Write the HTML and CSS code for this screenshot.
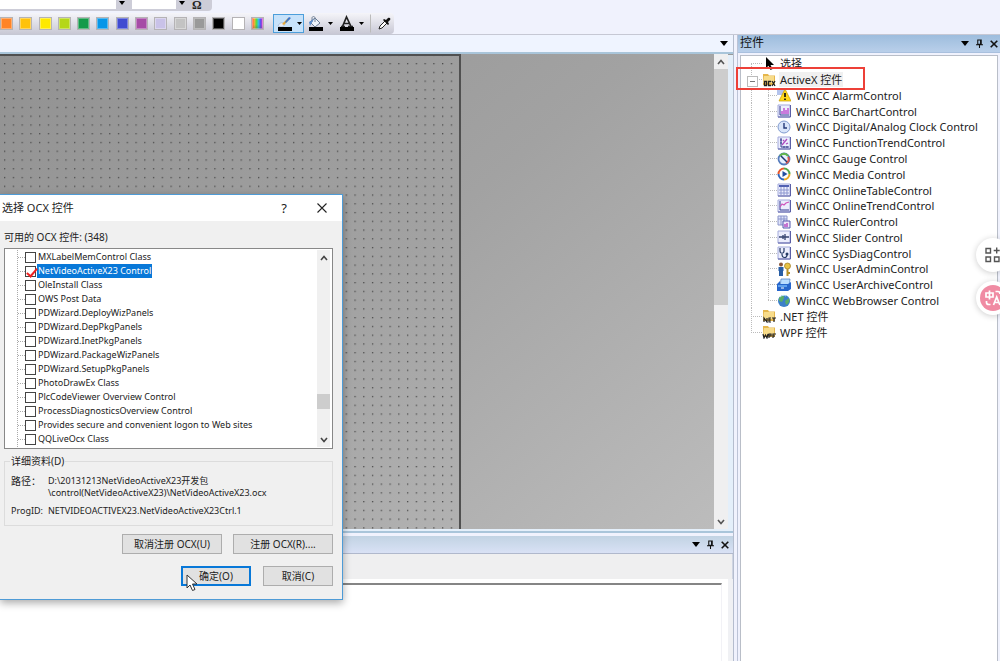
FILE: index.html
```html
<!DOCTYPE html>
<html lang="zh-CN">
<head>
<meta charset="utf-8">
<title>选择 OCX 控件</title>
<link rel="stylesheet" href="styles.css">
</head>
<body>
<svg class="defs" aria-hidden="true">
  <symbol id="down" viewBox="0 0 8 5"><path d="M0 0h8L4 5z"/></symbol>
  <symbol id="pin" viewBox="0 0 8 10"><path d="M2 1h4v5H2zM0 6.500h8M4 6.500V10M5.200 1v5" fill="none" stroke="currentColor" stroke-width="1.200"/></symbol>
  <symbol id="close" viewBox="0 0 8 8"><path d="M.7.7l6.600 6.600M7.300.7L.7 7.300" fill="none" stroke="currentColor" stroke-width="1.600"/></symbol>
  <symbol id="chev-up" viewBox="0 0 8 6"><path d="M1 5l3-3.500L7 5" fill="none" stroke="currentColor" stroke-width="1.600"/></symbol>
  <symbol id="chev-down" viewBox="0 0 8 6"><path d="M1 1l3 3.500L7 1" fill="none" stroke="currentColor" stroke-width="1.600"/></symbol>
  <symbol id="folder" viewBox="0 0 14 14"><path d="M1 1h5l1 1.500h6V12H1z" fill="#e5b64c"/><path d="M2 3h10v7H1z" fill="#f8dc8a"/></symbol>
  <symbol id="frame" viewBox="0 0 14 14"><path d="M1 1h12v12H1z" fill="#eceefd" stroke="#a3aadb"/><path d="M1 13h12.500V1" fill="none" stroke="#5a5fa6"/></symbol>
</svg>

<header class="toolbars">
  <div class="bar bar-font">
    <select class="combo combo-wide" aria-label="字体"><option></option></select>
    <svg class="combo-arrow" viewBox="0 0 11 9"><path d="M3 1h6L6 5z"/></svg>
    <select class="combo combo-narrow" aria-label="字号"><option></option></select>
    <svg class="combo-arrow" viewBox="0 0 11 9"><path d="M3 1h6L6 5z"/></svg>
    <button class="omega" aria-label="符号">Ω</button>
  </div>
  <div class="bar bar-color">
    <div class="swatches">
      <button class="swatch orange" aria-label="橙色"></button>
      <button class="swatch amber" aria-label="琥珀色"></button>
      <button class="swatch yellow" aria-label="黄色"></button>
      <button class="swatch lime" aria-label="黄绿色"></button>
      <button class="swatch green" aria-label="绿色"></button>
      <button class="swatch sky" aria-label="天蓝色"></button>
      <button class="swatch blue" aria-label="蓝色"></button>
      <button class="swatch purple" aria-label="紫色"></button>
      <button class="swatch lavender" aria-label="淡紫色"></button>
      <button class="swatch silver" aria-label="银色"></button>
      <button class="swatch gray" aria-label="灰色"></button>
      <button class="swatch black" aria-label="黑色"></button>
      <button class="swatch white" aria-label="白色"></button>
      <button class="swatch rainbow" aria-label="更多颜色"></button>
    </div>
    <button class="tool active" aria-label="线条颜色"><svg width="29" height="18" viewBox="0 0 29 18"><path d="M4 11c1-3 4-4 6-3s0 4-3 4z" fill="#e7edf8" stroke="#9badc8" stroke-width=".6"/><path d="M8 9l6-6 2 1-6 6z" fill="#e5a93a"/><path d="M11 7l4-5 2 1-5 5z" fill="#3c75cc"/><path d="M4 12h14v4H4z"/><path d="M23 7h5l-2.500 3z"/></svg></button>
    <button class="tool" aria-label="填充颜色"><svg width="29" height="18" viewBox="0 0 29 18"><path d="M5 7l5-4 5 5-5 4z" fill="#eef3fa" stroke="#667892"/><path d="M7 7V3c0-2 3-2 3 0v4" fill="none" stroke="#738399"/><path d="M4 7l5-3-4 7z" fill="#5c8dcc"/><path d="M4 12h14v4H4z"/><path d="M23 7h5l-2.500 3z"/></svg></button>
    <button class="tool" aria-label="字体颜色"><svg width="29" height="18" viewBox="0 0 29 18"><path d="M6.500 11.500L10.500 2l4.500 9.500M8 8.500h5M5 11.500h4M12 11.500h5" fill="none" stroke="#222" stroke-width="1.700"/><path d="M4 12h14v4H4z"/><path d="M23 7h5l-2.500 3z"/></svg></button>
    <button class="tool dropper" aria-label="吸管"><svg width="14" height="16" viewBox="0 0 14 16"><path d="M2 13l1-3 5-5 2 2-5 5z" fill="#fff" stroke="#222"/><path d="M6 4l1-1 2 1 2-2c2-1 3 1 2 2l-2 2 1 2-1 1z" fill="#111"/></svg></button>
  </div>
</header>

<main class="workspace">
  <section class="editor">
    <div class="doc-tabs"><button class="plain" aria-label="文档列表"><svg width="8" height="5"><use href="#down"/></svg></button></div>
    <div class="canvas-row">
      <div class="canvas">
        <div class="page">
          <svg width="100%" height="100%"><defs><pattern id="dots" x="4" y="7" width="8.760" height="8.760" patternUnits="userSpaceOnUse"><rect width="1.300" height="1.300" fill="#4c4c4c"/></pattern></defs><rect width="100%" height="100%" fill="url(#dots)"/></svg>
        </div>
      </div>
      <div class="vscroll">
        <button class="plain scroll-btn" aria-label="向上滚动"><svg width="8" height="6"><use href="#chev-up"/></svg></button>
        <div class="thumb"></div>
        <button class="plain scroll-btn" aria-label="向下滚动"><svg width="8" height="6"><use href="#chev-down"/></svg></button>
      </div>
    </div>
    <div class="output">
      <div class="pane-title">
        <span></span>
        <button class="plain" aria-label="菜单"><svg width="8" height="5"><use href="#down"/></svg></button>
        <button class="plain" aria-label="固定"><svg width="7" height="9"><use href="#pin"/></svg></button>
        <button class="plain" aria-label="关闭"><svg width="8" height="8"><use href="#close"/></svg></button>
      </div>
      <div class="output-tools"></div>
      <div class="output-body"><div class="output-sheet"></div></div>
    </div>
  </section>

  <aside class="controls">
    <div class="pane-title controls-title">
      <span>控件</span>
      <button class="plain" aria-label="菜单"><svg width="8" height="5"><use href="#down"/></svg></button>
      <button class="plain" aria-label="固定"><svg width="7" height="9"><use href="#pin"/></svg></button>
      <button class="plain" aria-label="关闭"><svg width="8" height="8"><use href="#close"/></svg></button>
    </div>
    <div class="tree-box">
      <ul class="tree">
        <li><i class="branch first"></i><svg class="ico" viewBox="0 0 14 14"><path d="M4 0v11l2.500-2.300L8.500 13l2-1-2-4h3.500z"/></svg><span>选择</span></li>
        <li><i class="branch open"></i><svg class="ico" viewBox="0 0 14 14"><use href="#folder"/><path d="M2.500 8.500v4h2v-4zM9 8.500H6.500v4H9M10 8l3 5M13 8l-3 5" fill="none" stroke="#222" stroke-width="1.300"/></svg><span class="current">ActiveX 控件</span></li>
        <li><i class="rail"></i><i class="branch sub"></i><svg class="ico" viewBox="0 0 14 14"><path d="M0 0h8v7H0z" fill="#b5c4ed"/><path d="M8 1l6 12H2z" fill="#ffd91a" stroke="#c69a00" stroke-width=".7"/><path d="M8 5v4M8 10.500V12" stroke="#111" stroke-width="1.700"/></svg><span>WinCC AlarmControl</span></li>
        <li><i class="rail"></i><i class="branch sub"></i><svg class="ico" viewBox="0 0 14 14"><use href="#frame"/><path d="M3 2v9h9" fill="none" stroke="#333a91"/><path d="M5 10V7M7 10V4M9 10V6M11 10V4" stroke="#be55d2" stroke-width="1.500"/></svg><span>WinCC BarChartControl</span></li>
        <li><i class="rail"></i><i class="branch sub"></i><svg class="ico" viewBox="0 0 14 14"><circle cx="7" cy="7" r="6" fill="#d9e5fa" stroke="#819bcf"/><path d="M7 3v5h3" fill="none" stroke="#243b79" stroke-width="1.400"/></svg><span>WinCC Digital/Analog Clock Control</span></li>
        <li><i class="rail"></i><i class="branch sub"></i><svg class="ico" viewBox="0 0 14 14"><use href="#frame"/><path d="M4 2v9h8M3 4h2M3 7h2M7 10v2M10 10v2" fill="none" stroke="#353d8d"/><path d="M5 9l5-6M6 4l1 1M9 8l2-1" stroke="#ae4ac0" stroke-width="1.300"/></svg><span>WinCC FunctionTrendControl</span></li>
        <li><i class="rail"></i><i class="branch sub"></i><svg class="ico" viewBox="0 0 14 14"><circle cx="7" cy="7" r="5.500" fill="#e8f1ff" stroke="#557bbc" stroke-width="1.800"/><path d="M3 4c2-3 6-3 8 0" fill="none" stroke="#64b94a" stroke-width="2"/><path d="M11 5c2 3 0 5-2 6" fill="none" stroke="#e0574b" stroke-width="2"/><path d="M4 4l6 6" stroke="#213975" stroke-width="1.500"/></svg><span>WinCC Gauge Control</span></li>
        <li><i class="rail"></i><i class="branch sub"></i><svg class="ico" viewBox="0 0 14 14"><circle cx="7" cy="7" r="5.500" fill="#fff"/><path d="M7 1.500A5.500 5.500 0 001.500 7" fill="none" stroke="#e85a2d" stroke-width="2"/><path d="M7 1.500A5.500 5.500 0 0112.500 7" fill="none" stroke="#55a74a" stroke-width="2"/><path d="M1.500 7A5.500 5.500 0 007 12.500" fill="none" stroke="#3267bd" stroke-width="2"/><path d="M12.500 7A5.500 5.500 0 017 12.500" fill="none" stroke="#eba927" stroke-width="2"/><path d="M5.500 4l5 3-5 3z" fill="#244f9f"/></svg><span>WinCC Media Control</span></li>
        <li><i class="rail"></i><i class="branch sub"></i><svg class="ico" viewBox="0 0 14 14"><use href="#frame"/><path d="M2 3h10" stroke="#5160b2" stroke-width="2"/><path d="M4 4v8M7 4v8M10 4v8M2 7h10M2 10h10" stroke="#8d97cf"/></svg><span>WinCC OnlineTableControl</span></li>
        <li><i class="rail"></i><i class="branch sub"></i><svg class="ico" viewBox="0 0 14 14"><use href="#frame"/><path d="M3 2v9h9" fill="none" stroke="#333a91"/><path d="M3 8l2-3 2 1 2-2 3-1" fill="none" stroke="#cf55bc" stroke-width="1.200"/></svg><span>WinCC OnlineTrendControl</span></li>
        <li><i class="rail"></i><i class="branch sub"></i><svg class="ico" viewBox="0 0 14 14"><path d="M1 1h9v9H1z" fill="#dfe4fa" stroke="#8b94ca"/><path d="M4 1v9M7 1v9M1 4h9" stroke="#8b94ca"/><path d="M6 6h7v7H6z" fill="#eee5fa" stroke="#555cad"/><path d="M8 12V9M10 12V8" stroke="#b64dc3" stroke-width="1.500"/></svg><span>WinCC RulerControl</span></li>
        <li><i class="rail"></i><i class="branch sub"></i><svg class="ico" viewBox="0 0 14 14"><use href="#frame"/><path d="M2 7h10M8 4v6M6 5v4" stroke="#34436f" stroke-width="1.300"/></svg><span>WinCC Slider Control</span></li>
        <li><i class="rail"></i><i class="branch sub"></i><svg class="ico" viewBox="0 0 14 14"><use href="#frame"/><path d="M3 2v3c0 3 4 3 4 0V2M5 8c0 5 5 4 5 1" fill="none" stroke="#263b66" stroke-width="1.200"/><circle cx="10" cy="8" r="1.500" fill="#263b66"/></svg><span>WinCC SysDiagControl</span></li>
        <li><i class="rail"></i><i class="branch sub"></i><svg class="ico" viewBox="0 0 14 14"><circle cx="4" cy="2.500" r="2" fill="#8a5637"/><path d="M1.500 5h5v4H6v5H2V9h-.5z" fill="#285ea5"/><circle cx="10.500" cy="4" r="3" fill="#e8c344" stroke="#9a7720" stroke-width=".7"/><path d="M10.500 7v7M11 11h2" stroke="#b4902a" stroke-width="2"/></svg><span>WinCC UserAdminControl</span></li>
        <li><i class="rail"></i><i class="branch sub"></i><svg class="ico" viewBox="0 0 14 14"><path d="M4 1h9l-1 8H3z" fill="#b9dcff" stroke="#4779bf" stroke-width=".7"/><path d="M0 6l3-3v3h8l3-2v7l-3 2H0z" fill="#2766cc"/><path d="M1 7h9v2H1z" fill="#5ea0ee"/><path d="M4 10h3" stroke="#fff"/></svg><span>WinCC UserArchiveControl</span></li>
        <li><i class="rail"></i><i class="branch sub last"></i><svg class="ico" viewBox="0 0 14 14"><circle cx="7" cy="7" r="6" fill="#3c7fc9"/><path d="M2 4c3-4 6-2 5 0L5 8 2 7zM8 7l4-3c1 4-1 6-3 7z" fill="#5aad68"/><path d="M3 3c2-2 4-2 6-1" fill="none" stroke="#c1e5f3"/></svg><span>WinCC WebBrowser Control</span></li>
        <li><i class="branch"></i><svg class="ico" viewBox="0 0 14 14"><use href="#folder"/><path d="M2 13V9l3 4V9M9 9H7v4h2M7 11h2M10 9h4M12 9v4" fill="none" stroke="#222" stroke-width="1.200"/></svg><span>.NET 控件</span></li>
        <li><i class="branch last"></i><svg class="ico" viewBox="0 0 14 14"><use href="#folder"/><path d="M1 9l1 4 1.500-3L5 13l1-4M7 13V9h2v2H7M11 13V9h3M11 11h2" fill="none" stroke="#222" stroke-width="1.200"/></svg><span>WPF 控件</span></li>
      </ul>
    </div>
  </aside>
</main>

<div class="annotation"></div>

<div class="floaters">
  <button class="float" aria-label="应用"><svg width="18" height="18" viewBox="0 0 18 18"><path d="M2 2.500h4.500V7H2zM2 11h4.500v4.500H2zM10.500 11H15v4.500h-4.500zM12.700 1.500v6M9.700 4.500h6" fill="none" stroke="#555" stroke-width="1.400"/></svg></button>
  <button class="float translate" aria-label="翻译"><svg width="26" height="26" viewBox="0 0 26 26"><circle cx="13" cy="13" r="13" fill="#f08ba3"/><path d="M6 8h7v4H6zM9.500 5.500v9M15.500 6.500h2.500q2 0 2 2.500M6.500 16v1.500q0 2 2.500 2h1.500M13.500 20l3.200-8 3.200 8M14.800 17.500h4" fill="none" stroke="#fff" stroke-width="1.700"/></svg></button>
</div>

<section class="dialog" role="dialog" aria-labelledby="dlg-title">
  <div class="dialog-title">
    <h1 id="dlg-title">选择 OCX 控件</h1>
    <button class="plain help" aria-label="帮助">?</button>
    <button class="plain" aria-label="关闭"><svg width="10" height="10" viewBox="0 0 10 10"><path d="M.5.5l9 9M9.500.5l-9 9" stroke="#222" stroke-width="1.100"/></svg></button>
  </div>
  <div class="dialog-body">
    <p class="list-label" id="list-label">可用的 OCX 控件: (348)</p>
    <div class="listbox" role="group" aria-labelledby="list-label">
      <div class="items">
        <label class="item"><input type="checkbox"><span>MXLabelMemControl Class</span></label>
        <label class="item"><input type="checkbox" checked><span class="selected">NetVideoActiveX23 Control</span></label>
        <label class="item"><input type="checkbox"><span>OleInstall Class</span></label>
        <label class="item"><input type="checkbox"><span>OWS Post Data</span></label>
        <label class="item"><input type="checkbox"><span>PDWizard.DeployWizPanels</span></label>
        <label class="item"><input type="checkbox"><span>PDWizard.DepPkgPanels</span></label>
        <label class="item"><input type="checkbox"><span>PDWizard.InetPkgPanels</span></label>
        <label class="item"><input type="checkbox"><span>PDWizard.PackageWizPanels</span></label>
        <label class="item"><input type="checkbox"><span>PDWizard.SetupPkgPanels</span></label>
        <label class="item"><input type="checkbox"><span>PhotoDrawEx Class</span></label>
        <label class="item"><input type="checkbox"><span>PlcCodeViewer Overview Control</span></label>
        <label class="item"><input type="checkbox"><span>ProcessDiagnosticsOverview Control</span></label>
        <label class="item"><input type="checkbox"><span>Provides secure and convenient logon to Web sites</span></label>
        <label class="item"><input type="checkbox"><span>QQLiveOcx Class</span></label>
      </div>
      <div class="list-scroll">
        <button class="plain scroll-btn" aria-label="向上滚动"><svg width="8" height="6"><use href="#chev-up"/></svg></button>
        <div class="list-thumb"></div>
        <button class="plain scroll-btn" aria-label="向下滚动"><svg width="8" height="6"><use href="#chev-down"/></svg></button>
      </div>
    </div>
    <fieldset class="details">
      <legend>详细资料(D)</legend>
      <dl>
        <dt class="path">路径：</dt><dd>D:\20131213NetVideoActiveX23开发包<br>\control(NetVideoActiveX23)\NetVideoActiveX23.ocx</dd>
        <dt>ProgID:</dt><dd>NETVIDEOACTIVEX23.NetVideoActiveX23Ctrl.1</dd>
      </dl>
    </fieldset>
    <div class="buttons"><button class="btn wide">取消注册 OCX(U)</button><button class="btn wide">注册 OCX(R)....</button></div>
    <div class="buttons confirm"><button class="btn primary">确定(O)</button><button class="btn">取消(C)</button></div>
  </div>
  <svg class="cursor" width="12" height="18" viewBox="0 0 12 18"><path d="M1 1v13l3-3 2.500 5.500 2.500-1L6.500 10H11z" fill="#fff" stroke="#333"/></svg>
</section>
</body>
</html>
```

FILE: styles.css
```css
* { box-sizing: border-box; }
body {
  margin: 0;
  height: 100vh;
  display: flex;
  flex-direction: column;
  overflow: hidden;
  background: #f0f2fd;
  color: #222;
  font: 11px/14px "Noto Sans", "Noto Sans CJK SC", sans-serif;
}
button, select, input { font: inherit; color: inherit; margin: 0; }
svg { display: block; flex: none; }
.defs { position: absolute; width: 0; height: 0; }
.plain { border: 0; padding: 0; background: none; display: flex; align-items: center; justify-content: center; }

/* toolbars */
.toolbars { flex: none; height: 35px; border-bottom: 1px solid #c6c8d4; display: flex; flex-direction: column; align-items: flex-start; gap: 2px; }
.bar { display: flex; align-items: center; background: linear-gradient(#f5f5f9, #c8c8d5); }
.bar-font { height: 11px; width: 212px; border-radius: 0 0 4px 0; background: #cdcdd8; align-items: flex-start; }
.combo { appearance: none; border: 0; border-radius: 0; background: #fff; height: 9px; padding: 0; }
.combo-wide { width: 116px; }
.combo-narrow { width: 44px; margin-left: 5px; }
.combo-arrow { width: 11px; height: 9px; }
.omega { border: 0; background: none; padding: 0; margin-left: 5px; height: 9px; font: bold 12px/8px "Liberation Serif", serif; }
.bar-color { height: 21px; width: 394px; border-radius: 0 4px 4px 0; }
.swatches { width: 264px; display: flex; justify-content: space-between; }
.swatch { width: 13px; height: 13px; padding: 0; border: 1px solid #b5b3b5; box-shadow: inset 0 0 0 1px #ffffff55; }
.orange { background: #ff8427; }
.amber { background: #ffc20c; }
.yellow { background: #ffe900; }
.lime { background: #b5d719; }
.green { background: #139a49; }
.sky { background: #0796e8; }
.blue { background: #414bd1; }
.purple { background: #a64ca6; }
.lavender { background: #c9c2e8; }
.silver { background: #c3c3c3; }
.gray { background: #999; }
.black { background: #000; }
.white { background: #fff; }
.rainbow { background: linear-gradient(#ffffff00, #ffffff00 60%, #55555566), linear-gradient(90deg, #f44, #fa3, #5d4, #3be, #64e, #e4b); }
.tool { height: 19px; width: 31px; padding: 0; border: 1px solid transparent; background: none; display: flex; align-items: center; }
.tool.active { margin-left: 9px; border-color: #4c9edb; background: #c7e2fa; }
.dropper { width: 24px; margin-left: 4px; padding-left: 6px; border-left-color: #bbb; }

/* workspace */
.workspace { flex: 1; min-height: 0; display: flex; gap: 3px; }
.editor { flex: 1; min-width: 0; display: flex; flex-direction: column; border-right: 1px solid #b5bdce; }
.doc-tabs { flex: none; height: 17px; display: flex; align-items: center; justify-content: flex-end; padding-right: 5px; background: #eff4ff; }
.canvas-row { flex: 1; min-height: 0; display: flex; border: solid #a9c5da; border-width: 2px 0 2px; padding-right: 5px; background: linear-gradient(90deg, #999 0 0) 0 0 / 100% 1px no-repeat, #e4effa; padding-bottom: 2px; }
.canvas { flex: 1; background: linear-gradient(140deg, #929292, #a2a2a2 50%, #bcbcbc); }
.page { width: 461px; height: 100%; border: solid #505050; border-width: 2px 2px 0 0; }
.vscroll { width: 14px; display: flex; flex-direction: column; background: #efeff0; color: #555; }
.scroll-btn { height: 15px; width: 100%; flex: none; }
.thumb { height: 236px; background: #cdcdcd; margin-bottom: auto; }
.output { flex: none; height: 125px; margin-top: 3px; display: flex; flex-direction: column; }
.pane-title { flex: none; height: 18px; display: flex; align-items: center; gap: 7px; padding: 0 4px; color: #111; background: linear-gradient(#c1d3e3, #d9e1f5); border-bottom: 1px solid #b0b8cc; }
.pane-title span { flex: 1; font-size: 12px; }
.output-tools { height: 25px; background: #efeff0; border-right: 1px solid #cfd5e3; }
.output-body { flex: 1; background: #fff; border-right: 5px solid #f0f1f4; padding: 4px 6px 0 0; }
.output-sheet { height: 100%; border-top: 2px solid #858585; border-right: 1px solid #f2f2f6; }

/* controls pane */
.controls { width: 263px; flex: none; display: flex; flex-direction: column; border-left: 1px solid #bcc3d6; }
.controls-title { background: linear-gradient(#9dbddd, #b9cfea); border-bottom-color: #a9c0de; padding: 0 2px; }
.controls-title span { line-height: 12px; padding-bottom: 2px; }
.tree-box { flex: 1; min-height: 0; margin: 2px 2px 0; border: 1px solid #b9bec8; border-bottom: 0; background: #fff; }
.tree { list-style: none; margin: 0; padding: 0 0 0 10px; height: 284px; display: grid; grid-auto-rows: 1fr; }
.tree li { display: flex; align-items: center; min-height: 0; }
.tree span { margin-left: 3px; padding: 0 1px; white-space: nowrap; line-height: 15px; }
.rail ~ span { margin-left: 4px; }
.current { background: #f0f0f0; }
.ico { width: 14px; height: 14px; }
.rail, .branch { align-self: stretch; width: 17px; background: repeating-linear-gradient(#bbb 0 1px, transparent 1px 2px) 0 0 / 1px 100% no-repeat; }
.branch { width: 11px; background: repeating-linear-gradient(#bbb 0 1px, transparent 1px 2px) 0 0 / 1px 100% no-repeat, repeating-linear-gradient(90deg, #bbb 0 1px, transparent 1px 2px) 0 50% / 100% 1px no-repeat; }
.branch.sub { width: 9px; }
.branch.last { background-size: 1px 50%, 100% 1px; }
.branch.first { background-position: 0 100%, 0 50%; background-size: 1px 50%, 100% 1px; }
.branch.open::before { content: ""; display: block; width: 9px; height: 9px; margin: 4px 0 0 -4px; border: 1px solid #bbb; background: linear-gradient(#777 0 0) 50% 50% / 5px 1px no-repeat #fff; }

/* overlays */
.annotation { position: absolute; top: 67px; right: 135px; width: 129px; height: 23px; border: 2px solid #ed4038; }
.floaters { position: absolute; top: 238px; right: -10px; display: flex; flex-direction: column; gap: 9px; }
.float { width: 34px; height: 34px; border: 0; border-radius: 50%; padding: 0; background: #fff; box-shadow: 0 1px 6px #0003; display: flex; align-items: center; justify-content: center; }

/* dialog */
.dialog { position: absolute; top: 194px; left: 0; width: 343px; border: solid #4e9bd6; border-width: 1px 1px 1px 0; background: #f0f0f0; box-shadow: 0 3px 8px #0005; font-size: 9px; line-height: 12px; }
.dialog-title { height: 26px; display: flex; align-items: center; gap: 30px; padding: 0 15px 0 2px; background: #fff; }
.dialog-title h1 { flex: 1; margin: 0; font-size: 11px; font-weight: 400; }
.help { font-size: 13px; }
.dialog-body { padding: 9px 9px 13px 4px; }
.list-label { margin: 0 0 4px; font-size: 10px; line-height: 14px; }
.listbox { display: flex; height: 201px; border: 1px solid #888; background: #fff; padding: 1px 2px 1px 0; overflow: hidden; }
.items { flex: 1; margin-left: 12px; border-left: 1px dotted #aaa; }
.item { display: flex; align-items: center; height: 14px; white-space: nowrap; }
.item::before { content: ""; width: 7px; border-top: 1px dotted #aaa; }
.item input { appearance: none; width: 11px; height: 11px; border: 1px solid #444; background: #fff; position: relative; }
.item input:checked::after { content: ""; position: absolute; left: 3px; top: -1px; width: 4px; height: 9px; border: solid #e22; border-width: 0 2px 2px 0; transform: rotate(40deg); }
.item span { margin-left: 1px; padding: 0 1px; line-height: 14px; }
.selected { background: #0878d8; color: #fff; }
.list-scroll { width: 13px; background: #f0f0f0; display: flex; flex-direction: column; color: #444; }
.list-thumb { margin: auto 0 23px; height: 15px; background: #cdcdcd; }
.details { margin: 6px 0 0; border: 1px solid #dcdcdc; padding: 8px 6px 2px; min-width: 0; height: 71px; }
.details legend { padding: 0 1px; margin-left: -1px; font-size: 10px; }
.details dl { margin: 0; display: grid; grid-template-columns: 37px 1fr; row-gap: 6px; white-space: nowrap; }
.details dd { margin: 0; }
.path { font-size: 10px; }
.buttons { display: flex; justify-content: flex-end; gap: 11px; margin-top: 8px; }
.confirm { gap: 12px; margin-top: 12px; }
.btn { width: 70px; height: 20px; padding: 0; border: 1px solid #adadad; background: #e1e1e1; font-size: 10px; line-height: 14px; }
.btn.wide { width: 100px; }
.btn.primary { border: 2px solid #0878d8; }
.cursor { position: absolute; left: 186px; top: 379px; }
```
